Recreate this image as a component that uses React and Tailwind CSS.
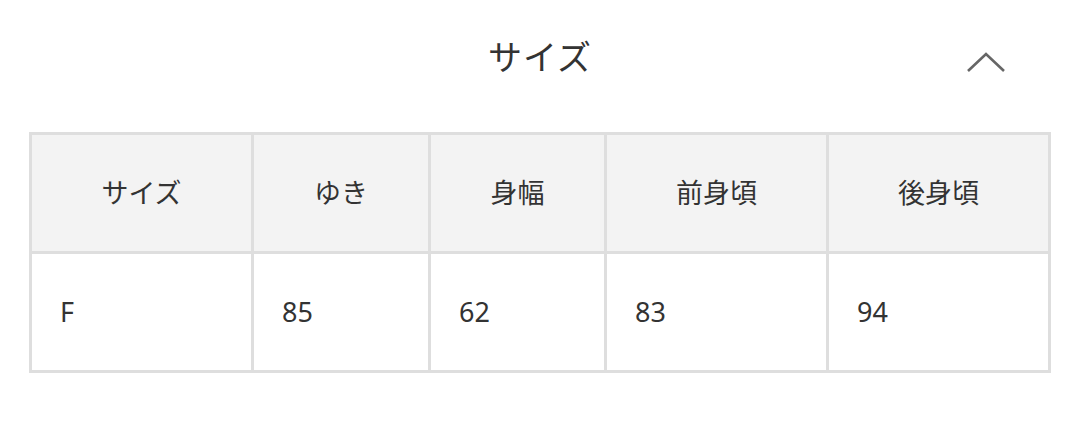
import React from 'react'

const heads = ['サイズ', 'ゆき', '身幅', '前身頃', '後身頃']
const values = ['F', '85', '62', '83', '94']
const widths = ['w-[222px]', 'w-[177px]', 'w-[176px]', 'w-[222px]', 'w-[222px]']

export default function App() {
  return (
    <div className="w-[1080px] h-[430px] bg-white text-[#333] font-['Noto_Sans','Noto_Sans_CJK_JP',sans-serif]">
      {/* header */}
      <div className="relative flex h-[132px] items-start justify-center pt-[28px]">
        <h2 className="text-[34px] leading-[58px] tracking-[0.03em]">サイズ</h2>
        <svg className="absolute right-[74px] top-[50px] h-[24px] w-[40px] text-[#666]" viewBox="0 0 40 24" fill="none" stroke="currentColor" strokeWidth="2.6" aria-hidden>
          <path d="M2 21L20 4l18 17" />
        </svg>
      </div>

      {/* size table */}
      <div className="px-[29px]">
        <table className="w-[1022px] table-fixed border-collapse border-[3px] border-[#dedede]">
          <tbody>
            <tr className="bg-[#f3f3f3]">
              {heads.map((h, i) => (
                <td key={h} className={`${widths[i]} h-[119px] border-[3px] border-[#dedede] text-center text-[27px]`}>{h}</td>
              ))}
            </tr>
            <tr>
              {values.map((v, i) => (
                <td key={i} className={`${widths[i]} h-[119px] border-[3px] border-[#dedede] pl-[28px] text-[27px]`}>{v}</td>
              ))}
            </tr>
          </tbody>
        </table>
      </div>
    </div>
  )
}
